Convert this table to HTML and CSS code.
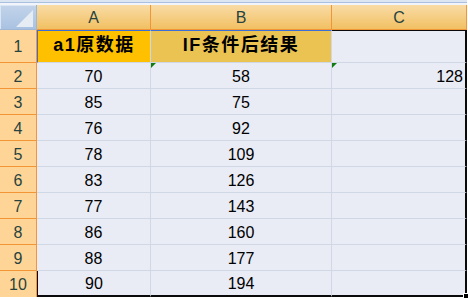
FILE: index.html
```html
<!DOCTYPE html>
<html>
<head>
<meta charset="utf-8">
<link rel="stylesheet" href="styles.css">
</head>
<body>
<div class="sheet">
  <div class="strip"></div>
  <div class="row hdr">
    <div class="corner"><div class="corner-tri"></div></div>
    <div class="colh wa">A</div>
    <div class="colh wb">B</div>
    <div class="colh wc">C</div>
  </div>
  <div class="row r1">
    <div class="rh">1</div>
    <div class="cell wa title ta">a1原数据</div>
    <div class="cell wb title tb">IF条件后结果</div>
    <div class="cell wc cc top-black"></div>
  </div>
  <div class="row">
    <div class="rh">2</div>
    <div class="cell wa">70</div>
    <div class="cell wb flag">58</div>
    <div class="cell wc cc flag">128</div>
  </div>
  <div class="row">
    <div class="rh">3</div>
    <div class="cell wa">85</div>
    <div class="cell wb">75</div>
    <div class="cell wc cc"></div>
  </div>
  <div class="row">
    <div class="rh">4</div>
    <div class="cell wa">76</div>
    <div class="cell wb">92</div>
    <div class="cell wc cc"></div>
  </div>
  <div class="row">
    <div class="rh">5</div>
    <div class="cell wa">78</div>
    <div class="cell wb">109</div>
    <div class="cell wc cc"></div>
  </div>
  <div class="row">
    <div class="rh">6</div>
    <div class="cell wa">83</div>
    <div class="cell wb">126</div>
    <div class="cell wc cc"></div>
  </div>
  <div class="row">
    <div class="rh">7</div>
    <div class="cell wa">77</div>
    <div class="cell wb">143</div>
    <div class="cell wc cc"></div>
  </div>
  <div class="row">
    <div class="rh">8</div>
    <div class="cell wa">86</div>
    <div class="cell wb">160</div>
    <div class="cell wc cc"></div>
  </div>
  <div class="row">
    <div class="rh">9</div>
    <div class="cell wa">88</div>
    <div class="cell wb">177</div>
    <div class="cell wc cc"></div>
  </div>
  <div class="row last">
    <div class="rh">10</div>
    <div class="cell wa left-black">90</div>
    <div class="cell wb">194</div>
    <div class="cell wc cc"></div>
  </div>
  <div class="handle"></div>
</div>
</body>
</html>
```
FILE: styles.css
```css
html, body {
  margin: 0;
  padding: 0;
  background: #ffffff;
}
body {
  width: 468px;
  height: 299px;
  overflow: hidden;
  font-family: "Liberation Sans", Arial, sans-serif;
}
.sheet {
  position: relative;
  width: 467px;
}
.strip {
  height: 5px;
  background: linear-gradient(#dce6f3 0, #dce6f3 2px, #a9c1de 2px, #a9c1de 3px, #f1f5fb 3px);
}
.row {
  display: flex;
  height: 26px;
}
.hdr {
  height: 25px;
}
.r1 {
  height: 33px;
}
.corner {
  position: relative;
  box-sizing: border-box;
  width: 37px;
  height: 25px;
  background: linear-gradient(#c3d4ea, #a9c2e2);
  border-right: 1px solid #9fb6d4;
  border-bottom: 1px solid #9fb6d4;
  box-shadow: inset 1px 1px 0 #dbe6f4;
}
.corner-tri {
  position: absolute;
  right: 3px;
  bottom: 2px;
  width: 0;
  height: 0;
  border-left: 17px solid transparent;
  border-bottom: 17px solid #e6ecf4;
}
.colh {
  box-sizing: border-box;
  height: 25px;
  background: linear-gradient(#f9dca6, #f1c062);
  border-right: 1px solid #f29536;
  border-bottom: 1px solid #f29536;
  display: flex;
  align-items: center;
  justify-content: center;
  color: #27433f;
  font-size: 16px;
  padding-top: 1px;
}
.wa { width: 114px; }
.wb { width: 181px; }
.wc { width: 135px; }
.rh {
  box-sizing: border-box;
  width: 37px;
  background: #ffd597;
  border-right: 1px solid #f29536;
  border-bottom: 1px solid #f29536;
  display: flex;
  align-items: center;
  justify-content: center;
  color: #27433f;
  font-size: 16px;
  padding-top: 2px;
}
.last .rh {
  border-bottom: none;
}
.cell {
  position: relative;
  box-sizing: border-box;
  background: #e9ebf5;
  border-right: 1px solid #d0d7e5;
  border-bottom: 1px solid #d0d7e5;
  display: flex;
  align-items: center;
  justify-content: center;
  font-size: 16px;
  color: #000;
  padding-top: 2px;
}
.cc {
  justify-content: flex-end;
  padding-right: 2px;
  border-right: 2px solid #0a0a0a;
}
.last .cell {
  border-bottom: 2px solid #0a0a0a;
}
.left-black {
  border-left: 1px solid #0a0a0a;
}
.title {
  font-family: "Liberation Sans", "Noto Sans CJK SC", sans-serif;
  font-weight: bold;
  font-size: 18px;
  letter-spacing: 1.5px;
  line-height: 20px;
  padding-top: 0;
  padding-bottom: 3px;
  border-top: 1px solid #3b6fd8;
}
.ta {
  background: #ffc000;
  border-left: 1px solid #3b6fd8;
}
.tb {
  background: #eac353;
}
.top-black {
  border-top: 1px solid #0a0a0a;
}
.flag::before {
  content: "";
  position: absolute;
  left: 0;
  top: 0;
  width: 0;
  height: 0;
  border-top: 5px solid #107c10;
  border-right: 5px solid transparent;
}
.handle {
  position: absolute;
  left: 463px;
  top: 293px;
  width: 4px;
  height: 4px;
  background: #000;
  border: 1px solid #fff;
}
```
